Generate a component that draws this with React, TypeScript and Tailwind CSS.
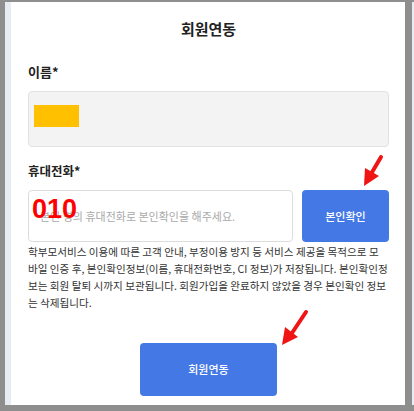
export default function App() {
  return (
    <div
      className="relative flex w-[414px] h-[411px] bg-[#8e8e8e] pt-[2px] pb-[6px] overflow-hidden"
      style={{ fontFamily: '"Noto Sans CJK KR", "Noto Sans", sans-serif' }}
    >
      <div className="w-[5px] flex-none" />
      <div className="w-[6px] flex-none bg-[#e7ecf3]" />
      <div className="flex-1 min-w-0 bg-white flex flex-col pl-[17px] pr-[16px]">
        <h1 className="pt-[15px] text-center text-[15px] leading-[24px] font-bold text-[#222]">
          회원연동
        </h1>

        <div className="mt-[21px] text-[13px] leading-[20px] font-bold text-[#222]">이름*</div>
        <div className="mt-[9px] h-[56px] rounded-[4px] border border-[#e2e2e2] bg-[#f3f3f3] pl-[5px] pt-[13px]">
          <div className="w-[45px] h-[22px] bg-[#ffc000]" />
        </div>

        <div className="mt-[14px] text-[12.5px] leading-[20px] font-bold text-[#222]">휴대전화*</div>
        <div className="mt-[9px] flex gap-[9px] h-[52px]">
          <div className="relative flex-1">
            <input
              className="w-full h-full rounded-[4px] border border-[#dcdcdc] bg-white pl-[11px] text-[11px] text-[#333] placeholder:text-[#a9a9a9] outline-none"
              placeholder="본인 명의 휴대전화로 본인확인을 해주세요."
            />
            <span
              className="absolute left-[4px] top-[6px] text-[27px] leading-[27px] font-bold text-[#ff0000]"
              style={{ fontFamily: '"Liberation Sans", Arial, sans-serif' }}
            >
              010
            </span>
          </div>
          <button className="w-[87px] flex-none rounded-[4px] bg-[#4479e5] text-white text-[11px] font-medium">
            본인확인
          </button>
        </div>

        <p className="mt-[1px] w-[360px] text-[10.6px] leading-[17px] text-[#333] break-all">
          학부모서비스 이용에 따른 고객 안내, 부정이용 방지 등 서비스 제공을 목적으로 모바일 인증 후,
          본인확인정보(이름, 휴대전화번호, CI 정보)가 저장됩니다. 본인확인정보는 회원 탈퇴 시까지
          보관됩니다. 회원가입을 완료하지 않았을 경우 본인확인 정보는 삭제됩니다.
        </p>

        <button className="mt-[32px] mx-auto w-[137px] h-[53px] rounded-[4px] bg-[#4479e5] text-white text-[11px] font-medium">
          회원연동
        </button>
      </div>
      <div className="w-[7px] flex-none" />
      <div className="w-[2px] flex-none bg-[#e7ecf3]" />

      <svg className="absolute inset-0 pointer-events-none" width="414" height="411" viewBox="0 0 414 411">
        <line x1="381" y1="157" x2="371" y2="174" stroke="#f01414" strokeWidth="4" strokeLinecap="round" />
        <polygon points="364,186 379,176 365,168" fill="#f01414" />
        <line x1="306" y1="312" x2="292" y2="333" stroke="#f01414" strokeWidth="4" strokeLinecap="round" />
        <polygon points="282,345 298,337 285,327" fill="#f01414" />
      </svg>
    </div>
  );
}
